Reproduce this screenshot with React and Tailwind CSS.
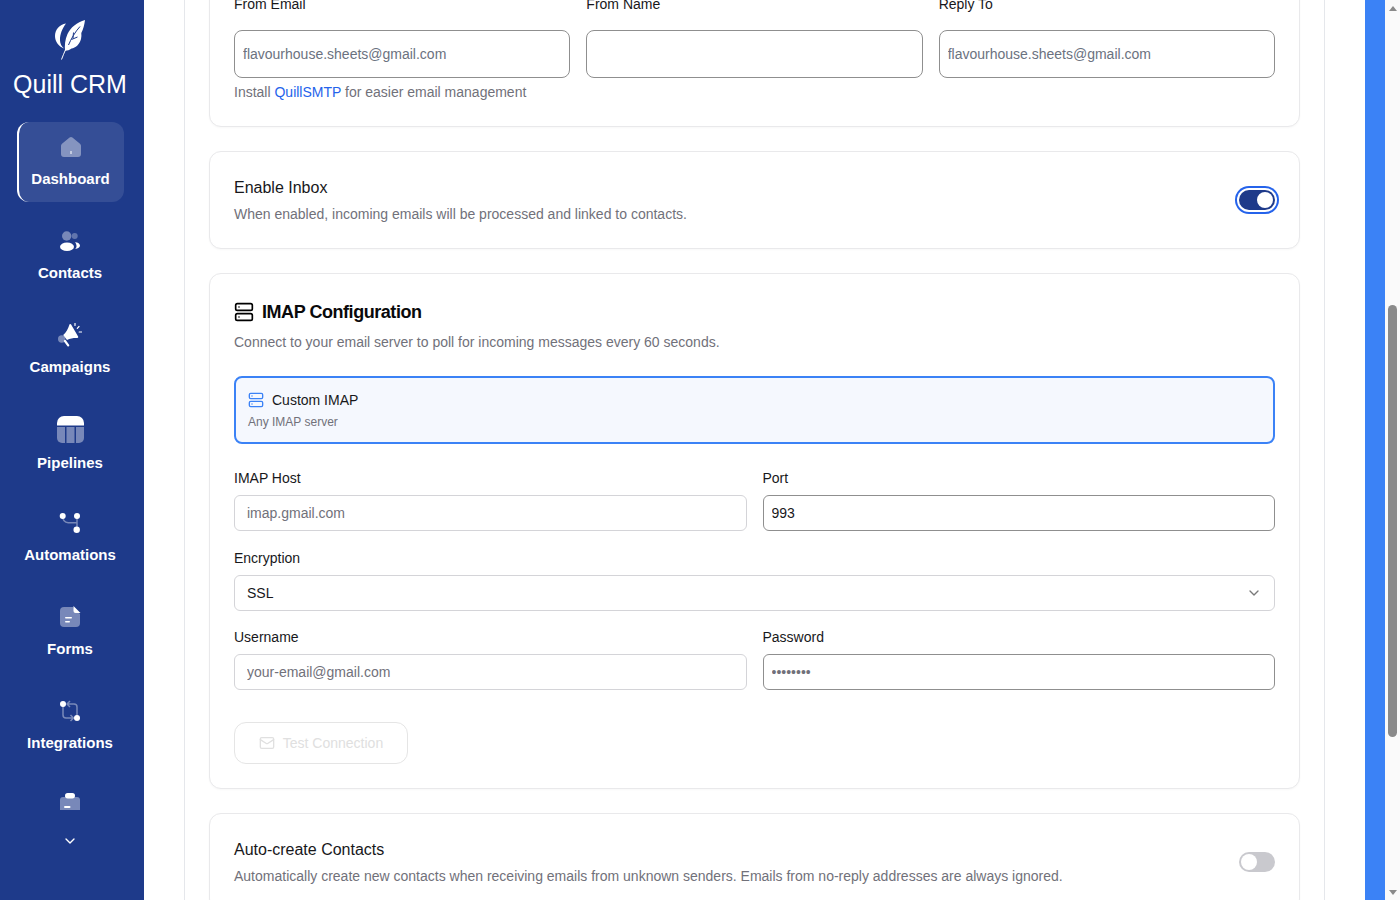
import React from 'react';
import { ChevronDown, Mail, Server } from 'lucide-react';

// Duotone sidebar icons, 24 box unless noted
const HomeIcon = () => (
  <svg viewBox="0 0 24 24" className="w-6 h-6" fill="#fff">
    <path opacity=".4" d="M10.6 2.6a2.2 2.2 0 0 1 2.8 0l7.6 6.2c.6.5 1 1.2 1 2V19a3 3 0 0 1-3 3H5a3 3 0 0 1-3-3v-8.200c0-.8.4-1.500 1-2z" />
    <rect x="11.500" y="16" width="1" height="3" />
  </svg>
);

const ContactsIcon = () => (
  <svg viewBox="0 0 24 24" className="w-6 h-6" fill="#fff">
    <circle opacity=".4" cx="8.700" cy="7" r="4.700" />
    <circle opacity=".3" cx="16.700" cy="7" r="3" />
    <ellipse cx="9" cy="17.700" rx="7" ry="4.300" />
    <path d="M17 13.200c3 .2 5 1.600 5 3.400s-2 3.300-4.800 3.500c1-1 1.400-2.200 1.300-3.400-.1-1.400-.6-2.600-1.500-3.500z" />
  </svg>
);

const CampaignsIcon = () => (
  <svg viewBox="0 0 24 24" className="w-6 h-6" fill="#fff">
    <circle opacity=".4" cx="3.700" cy="16" r="3.700" />
    <path d="M11.500 1.500c.5-.6 1.200-.5 1.600.1l7 12c.4.700 0 1.500-.8 1.500-3-.2-7 .3-10.300 2l-3.800-5c2.900-2.100 5-6.600 6.300-10.600z" />
    <path d="M7 18l3.200 4.300" stroke="#fff" strokeWidth="2.200" strokeLinecap="round" />
    <path d="M17 0v2.500M21 3.500L19.300 5.300M24 9h-2.800" stroke="#fff" strokeWidth="1.200" strokeLinecap="round" />
  </svg>
);

const PipelinesIcon = () => (
  <svg viewBox="0 0 27 27" className="w-[27px] h-[27px] shrink-0" fill="#fff">
    <path d="M0 9.500V7a7 7 0 0 1 7-7h13a7 7 0 0 1 7 7v2.500z" />
    <path opacity=".4" d="M0 11h8v16H5a5 5 0 0 1-5-5z" />
    <path opacity=".4" d="M9.500 11h8v16h-8z" />
    <path opacity=".4" d="M19 11h8v11a5 5 0 0 1-5 5h-3z" />
  </svg>
);

const AutomationsIcon = () => (
  <svg viewBox="0 0 24 24" className="w-6 h-6" fill="#fff">
    <path opacity=".4" d="M4.700 5c0 4 2 6.500 5.500 6.700H19M19 5v13.700" fill="none" stroke="#fff" strokeWidth="1.500" />
    <circle cx="4.700" cy="5" r="3" />
    <circle cx="19" cy="5" r="3" />
    <circle cx="18.700" cy="18.700" r="3.200" />
  </svg>
);

const FormsIcon = () => (
  <svg viewBox="0 0 24 24" className="w-6 h-6" fill="#fff">
    <path opacity=".4" d="M6 2h9l7 7v9a4 4 0 0 1-4 4H6a4 4 0 0 1-4-4V6a4 4 0 0 1 4-4z" />
    <path d="M15.500 1l7 7h-5a2 2 0 0 1-2-2z" />
    <rect x="7" y="12" width="7" height="1.600" rx=".8" />
    <rect x="7" y="16" width="5" height="1.600" rx=".8" />
  </svg>
);

const IntegrationsIcon = () => (
  <svg viewBox="0 0 24 24" className="w-6 h-6" fill="#fff">
    <g opacity=".4" fill="none" stroke="#fff" strokeWidth="1.500">
      <path d="M5 7v9a3 3 0 0 0 3 3h7M12.500 16l3 3-3 3" />
      <path d="M19 17V8a3 3 0 0 0-3-3H9.500M12 2L9 5l3 3" />
    </g>
    <circle cx="5" cy="5" r="3" />
    <circle cx="19" cy="19" r="3" />
  </svg>
);

const ClippedIcon = () => (
  <svg viewBox="0 0 24 24" className="w-6 h-6" fill="#fff">
    <path opacity=".4" d="M5 4h14a3 3 0 0 1 3 3v15a2 2 0 0 1-2 2H4a2 2 0 0 1-2-2V7a3 3 0 0 1 3-3z" />
    <rect x="7" y="0" width="10" height="5.500" rx="2.700" />
    <rect x="6" y="13" width="6.500" height="2" rx="1" />
  </svg>
);

const navItems = [
  { label: 'Dashboard', icon: <HomeIcon />, active: true },
  { label: 'Contacts', icon: <ContactsIcon /> },
  { label: 'Campaigns', icon: <CampaignsIcon /> },
  { label: 'Pipelines', icon: <PipelinesIcon />, tall: true },
  { label: 'Automations', icon: <AutomationsIcon /> },
  { label: 'Forms', icon: <FormsIcon /> },
  { label: 'Integrations', icon: <IntegrationsIcon /> },
  // scrolled past the nav's bottom edge, only the icon shows
  { label: '', icon: <ClippedIcon /> },
];

const Sidebar = () => (
  <aside className="w-36 shrink-0 h-screen bg-[#1e3a8a] text-white flex flex-col pr-1">
    <div className="h-[122px] shrink-0 pt-5 flex flex-col items-center">
      <svg viewBox="0 0 30 40" className="w-[30px] h-10" fill="#fff">
        <path d="M11 3.500C4.500 4.500 0 9.500 0 16c0 5.500 3.500 10.500 9 12.500-2.500-2-3.800-5-4-8-.2-6.500 2.500-12.500 6-17z" />
        <path d="M30 0C22 2.500 15.500 7.500 12.500 14c-2.500 5.500-3 11.500-2.500 17 2.500-.5 4.500-1 6.500-2.500 4-.5 8-4 9.500-9.500.5-2 .5-4 .3-6 2-4 3.200-8.500 3.700-13z" />
        <path d="M25 6.500C18 14 12 25 6.500 39.500" fill="none" stroke="#fff" strokeWidth="1" />
        <path d="M25 6.500C20 12 16 19 13.500 25M18.500 12.500l-.5 6M22.500 17l-6 2.500" fill="none" stroke="#1e3a8a" strokeWidth="1" />
      </svg>
      <div className="mt-1.5 text-[25px] leading-[36px] whitespace-nowrap">Quill CRM</div>
    </div>
    <nav className="h-[688px] shrink-0 overflow-hidden flex flex-col gap-3.5 items-center">
      {navItems.map((item, i) => (
        <a
          key={i}
          className={
            item.active
              ? 'w-[107px] h-20 shrink-0 ml-[1px] pr-[2px] pt-[13px] flex flex-col items-center rounded-xl border-l-2 border-white bg-white/10'
              : 'w-[107px] h-20 shrink-0 pt-[13px] flex flex-col items-center rounded-xl'
          }
        >
          <div className={item.tall ? 'h-[26px] -mt-px flex items-start justify-center' : 'h-6 flex items-start justify-center'}>{item.icon}</div>
          {item.label && (
            <div className={item.tall ? 'mt-[11px] text-[15px] leading-5 font-bold whitespace-nowrap' : 'mt-2.5 text-[15px] leading-5 font-bold whitespace-nowrap'}>{item.label}</div>
          )}
        </a>
      ))}
    </nav>
    <div className="flex justify-center pt-[23px]">
      <ChevronDown className="w-4 h-4" />
    </div>
  </aside>
);

const Toggle = ({ on }) =>
  on ? (
    <div className="w-9 h-5 shrink-0 rounded-full bg-[#1e3a8a] flex items-center justify-end pr-0.5 ring-2 ring-[#2563eb] ring-offset-2">
      <div className="w-4 h-4 rounded-full bg-white" />
    </div>
  ) : (
    <div className="w-9 h-5 shrink-0 rounded-full bg-[#c9c9ce] flex items-center pl-0.5">
      <div className="w-4 h-4 rounded-full bg-white" />
    </div>
  );

const Card = ({ children }) => (
  <section className="bg-white rounded-xl border border-[#e9e9eb] shadow-[0_1px_2px_rgba(0,0,0,0.03)] p-6">{children}</section>
);

const TallField = ({ label, value }) => (
  <div>
    <div className="text-sm leading-5 text-[#18181b] mb-[16px]">{label}</div>
    <input
      readOnly
      defaultValue={value}
      className="w-full h-12 px-2 rounded-lg border border-[#8f8f8f] text-sm text-[#6b7280] bg-white outline-none"
    />
  </div>
);

const Field = ({ label, placeholder, value, type = 'text' }) => (
  <div>
    <div className="text-sm leading-5 text-[#18181b] mb-[7px]">{label}</div>
    {value ? (
      <input
        readOnly
        type={type}
        defaultValue={value}
        className={
          type === 'password'
            ? 'w-full h-9 px-2 rounded-md border border-[#8f8f8f] text-sm text-[#71717a] bg-white outline-none'
            : 'w-full h-9 px-2 rounded-md border border-[#8f8f8f] text-sm text-[#18181b] bg-white outline-none'
        }
      />
    ) : (
      <input
        readOnly
        placeholder={placeholder}
        className="w-full h-9 px-3 rounded-md border border-[#d4d4d8] text-sm bg-white outline-none placeholder:text-[#71717a]"
      />
    )}
  </div>
);

const ToggleRow = ({ title, desc, on }) => (
  <div className="flex items-center justify-between gap-4">
    <div>
      <div className="text-base leading-6 text-[#18181b]">{title}</div>
      <div className="mt-1 text-sm leading-5 text-[#71717a]">{desc}</div>
    </div>
    <Toggle on={on} />
  </div>
);

const Content = () => (
  <div className="-mt-[31px] flex flex-col gap-6">
    <Card>
      <div className="grid grid-cols-3 gap-4">
        <TallField label="From Email" value="flavourhouse.sheets@gmail.com" />
        <TallField label="From Name" value="" />
        <TallField label="Reply To" value="flavourhouse.sheets@gmail.com" />
      </div>
      <p className="mt-1 text-sm leading-5 text-[#71717a]">
        Install <a className="text-[#2563eb]">QuillSMTP</a> for easier email management
      </p>
    </Card>

    <Card>
      <ToggleRow
        on
        title="Enable Inbox"
        desc="When enabled, incoming emails will be processed and linked to contacts."
      />
    </Card>

    <Card>
      <div className="flex items-center gap-2">
        <Server className="w-5 h-5 text-black" />
        <h2 className="text-lg leading-7 font-bold text-[#09090b] tracking-tight">IMAP Configuration</h2>
      </div>
      <p className="mt-1.5 text-sm leading-5 text-[#71717a]">
        Connect to your email server to poll for incoming messages every 60 seconds.
      </p>

      <div className="mt-6 h-[68px] rounded-lg border-2 border-[#3b82f6] bg-[#f5f8fe] px-3 pt-3">
        <div className="flex items-center gap-2 h-[20px]">
          <Server className="w-4 h-4 text-[#3b82f6]" />
          <span className="text-sm leading-5 text-[#18181b]">Custom IMAP</span>
        </div>
        <div className="mt-0.5 text-xs leading-5 text-[#71717a]">Any IMAP server</div>
      </div>

      <div className="mt-6 grid grid-cols-2 gap-x-4 gap-y-[17px]">
        <Field label="IMAP Host" placeholder="imap.gmail.com" />
        <Field label="Port" value="993" />
        <div className="col-span-2">
          <div className="text-sm leading-5 text-[#18181b] mb-[7px]">Encryption</div>
          <div className="h-9 px-3 rounded-md border border-[#d4d4d8] flex items-center justify-between text-sm text-[#18181b]">
            <span>SSL</span>
            <ChevronDown className="w-4 h-4 text-[#7a7a7a]" />
          </div>
        </div>
      </div>
      <div className="mt-4 grid grid-cols-2 gap-x-4">
        <Field label="Username" placeholder="your-email@gmail.com" />
        <Field label="Password" value="password" type="password" />
      </div>

      <button className="mt-8 h-[42px] w-[174px] rounded-xl border border-[#e5e5e5] flex items-center justify-center gap-2 text-sm text-[#e0e0e0]">
        <Mail className="w-4 h-4" />
        Test Connection
      </button>
    </Card>

    <Card>
      <ToggleRow
        title="Auto-create Contacts"
        desc="Automatically create new contacts when receiving emails from unknown senders. Emails from no-reply addresses are always ignored."
      />
    </Card>
  </div>
);

const Scrollbar = () => (
  <div className="w-[15px] shrink-0 h-screen bg-[#fafafa] flex flex-col items-center">
    <div className="h-[16px] flex items-center justify-center">
      <div className="w-0 h-0 border-x-[4.500px] border-x-transparent border-b-[5px] border-b-[#8a8a8a]" />
    </div>
    <div className="flex-1 w-full px-[3px]">
      <div className="mt-[289px] h-[432px] rounded-full bg-[#8a8a8a]" />
    </div>
    <div className="h-[16px] flex items-center justify-center">
      <div className="w-0 h-0 border-x-[4.500px] border-x-transparent border-t-[5px] border-t-[#8a8a8a]" />
    </div>
  </div>
);

export default function App() {
  return (
    <div className="h-screen flex overflow-hidden bg-white font-['Liberation_Sans',Arial,sans-serif]">
      <Sidebar />
      <main className="flex-1 min-w-0 h-screen overflow-hidden px-10">
        <div className="h-full flex flex-col border-x border-[#e5e7eb] px-6">
          <Content />
        </div>
      </main>
      <div className="w-5 shrink-0 bg-[#3b82f6]" />
      <Scrollbar />
    </div>
  );
}
